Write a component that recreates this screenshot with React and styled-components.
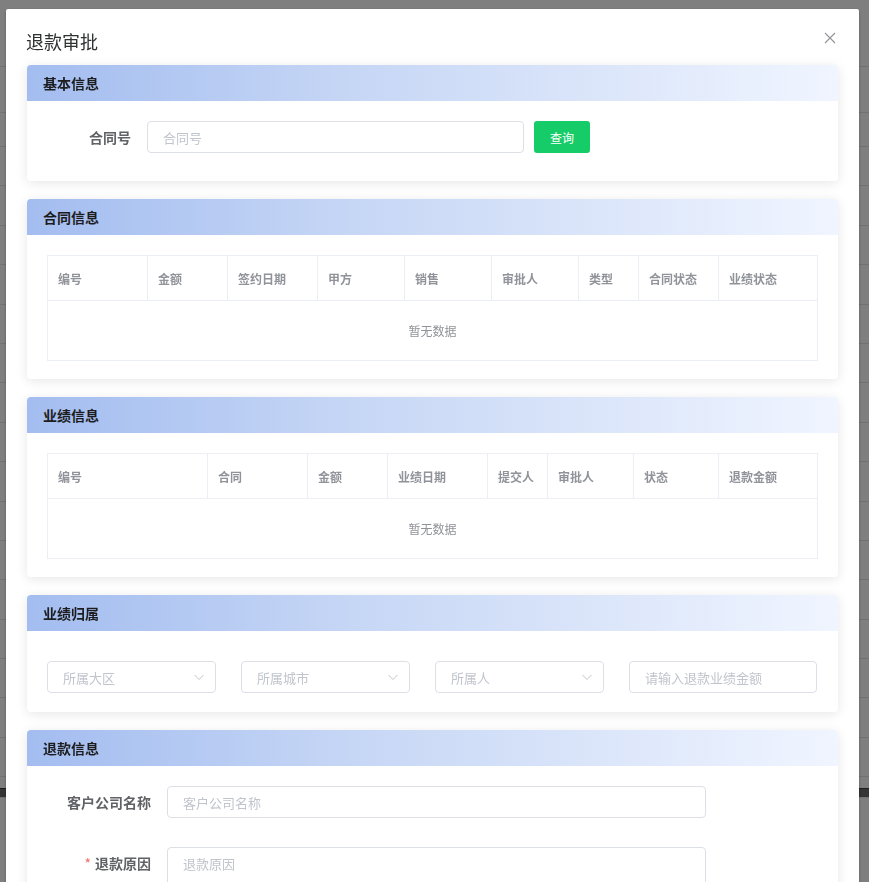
import styled, { createGlobalStyle } from "styled-components";

const GlobalStyle = createGlobalStyle`
  html, body {
    margin: 0;
    padding: 0;
    overflow: hidden;
    background: #fff;
  }
  body {
    font-family: "Noto Sans CJK SC", "Noto Sans", "Liberation Sans", sans-serif;
  }
  * { box-sizing: border-box; }
`;

// page behind the dialog mask
const Page = styled.div`
  height: 882px;
  display: flex;
  flex-direction: column;
  padding-top: 66px;
`;
const PageRow = styled.div`
  height: ${p => p.h}px;
  flex-shrink: 0;
  border-top: 1px solid ${p => (p.dark ? "#3a3a3a" : "#e4e4e4")};
  background: ${p => (p.dark ? "#6a6a6a" : "transparent")};
`;

const Mask = styled.div`
  position: fixed;
  inset: 0;
  background: rgba(0, 0, 0, 0.5);
  overflow: hidden;
`;
const Dialog = styled.div`
  width: 853px;
  margin: 9px 0 0 6px;
  background: #fff;
  border-radius: 2px;
  box-shadow: 0 1px 3px rgba(0, 0, 0, 0.3);
`;
const DialogHeader = styled.div`
  display: flex;
  align-items: center;
  justify-content: space-between;
  padding: 20px 20px 12px 20px;
  height: 56px;
`;
const DialogTitle = styled.span`
  font-size: 18px;
  line-height: 24px;
  color: #303133;
`;
const CloseBtn = styled.button`
  border: 0;
  background: none;
  padding: 0;
  width: 16px;
  height: 16px;
  display: flex;
  align-items: center;
  justify-content: center;
  margin-right: 1px;
  margin-top: -6px;
  cursor: pointer;
`;
const DialogBody = styled.div`
  padding: 0 21px 40px 21px;
  display: flex;
  flex-direction: column;
  gap: 18px;
`;

const Card = styled.section`
  background: #fff;
  border-radius: 4px;
  box-shadow: 0 2px 12px rgba(0, 0, 0, 0.1);
  overflow: hidden;
`;
const CardHeader = styled.div`
  height: 36px;
  display: flex;
  align-items: center;
  padding-left: 16px;
  background: linear-gradient(90deg, #a3bdf0 0%, #c6d6f5 40%, #f0f5ff 100%);
  font-size: 14px;
  font-weight: bold;
  color: #1d1d1f;
`;
const CardBody = styled.div`
  padding: ${p => p.pad};
`;

const FormRow = styled.div`
  display: flex;
  align-items: flex-start;
  margin-bottom: ${p => p.mb || 0}px;
`;
const Label = styled.label`
  width: ${p => p.w}px;
  flex-shrink: 0;
  height: 32px;
  line-height: 32px;
  text-align: right;
  padding-right: 16px;
  font-size: 14px;
  font-weight: bold;
  color: #606266;
`;
const Star = styled.span`
  color: #f56c6c;
  margin-right: 4px;
  font-weight: normal;
`;
const Input = styled.input`
  width: ${p => p.w}px;
  height: 32px;
  border: 1px solid #dcdfe6;
  border-radius: 4px;
  padding: 0 15px;
  font-size: 13px;
  font-family: inherit;
  color: #606266;
  outline: none;
  &::placeholder { color: #c0c4cc; }
`;
const TextArea = styled.textarea`
  width: ${p => p.w}px;
  height: 80px;
  border: 1px solid #dcdfe6;
  border-radius: 4px;
  padding: 5px 15px;
  font-size: 13px;
  line-height: 22px;
  font-family: inherit;
  resize: none;
  outline: none;
  &::placeholder { color: #c0c4cc; }
`;
const SearchButton = styled.button`
  margin-left: 10px;
  width: 56px;
  height: 32px;
  border: 0;
  border-radius: 3px;
  background: #16cc68;
  color: #fff;
  font-size: 12px;
  font-family: inherit;
`;

const Table = styled.table`
  width: 100%;
  border-collapse: collapse;
  table-layout: fixed;
  border: 1px solid #ebeef5;
`;
const Th = styled.th`
  height: 45px;
  padding: 0 10px;
  text-align: left;
  font-size: 12px;
  font-weight: bold;
  color: #909399;
  border-right: 1px solid #ebeef5;
  border-bottom: 1px solid #ebeef5;
  white-space: nowrap;
  overflow: hidden;
`;
const EmptyCell = styled.td`
  height: 60px;
  text-align: center;
  font-size: 12px;
  color: #909399;
`;

const FilterRow = styled.div`
  display: flex;
  gap: 25px;
`;
const Select = styled.div`
  width: ${p => p.w}px;
  height: 32px;
  border: 1px solid #dcdfe6;
  border-radius: 4px;
  display: flex;
  align-items: center;
  justify-content: space-between;
  padding: 0 10px 0 15px;
  font-size: 13px;
  color: #c0c4cc;
`;

const Chevron = () => (
  <svg width="12" height="12" viewBox="0 0 12 12" fill="none">
    <path d="M1.5 4l4.5 4.5L10.5 4" stroke="#c0c4cc" strokeWidth="1" />
  </svg>
);

const DataTable = ({ cols }) => (
  <Table>
    <colgroup>
      {cols.map(c => (
        <col key={c.t} style={{ width: c.w }} />
      ))}
    </colgroup>
    <thead>
      <tr>
        {cols.map(c => (
          <Th key={c.t}>{c.t}</Th>
        ))}
      </tr>
    </thead>
    <tbody>
      <tr>
        <EmptyCell colSpan={cols.length}>暂无数据</EmptyCell>
      </tr>
    </tbody>
  </Table>
);

const contractCols = [
  { t: "编号", w: 100 },
  { t: "金额", w: 80 },
  { t: "签约日期", w: 90 },
  { t: "甲方", w: 87 },
  { t: "销售", w: 87 },
  { t: "审批人", w: 87 },
  { t: "类型", w: 60 },
  { t: "合同状态", w: 80 },
  { t: "业绩状态", w: 99 },
];
const perfCols = [
  { t: "编号", w: 160 },
  { t: "合同", w: 100 },
  { t: "金额", w: 80 },
  { t: "业绩日期", w: 100 },
  { t: "提交人", w: 60 },
  { t: "审批人", w: 86 },
  { t: "状态", w: 85 },
  { t: "退款金额", w: 99 },
];

const pageRows = [46, 34, 39.4, 39.4, 39.4, 39.4, 39.4, 39.4, 39.4, 39.4, 39.4, 39.4, 39.4, 39.4, 39.4, 39.4, 39.4, 39.4, 12];

const App = () => {
  return (
    <>
      <GlobalStyle />
      <Page>
        {pageRows.map((h, i) => (
          <PageRow key={i} h={h} />
        ))}
        <PageRow h={9} dark />
        <PageRow h={40} />
      </Page>
      <Mask>
        <Dialog>
          <DialogHeader>
            <DialogTitle>退款审批</DialogTitle>
            <CloseBtn aria-label="close">
              <svg width="12" height="12" viewBox="0 0 12 12">
                <path d="M1 1l10 10M11 1L1 11" stroke="#909399" strokeWidth="1.1" />
              </svg>
            </CloseBtn>
          </DialogHeader>
          <DialogBody>
            <Card>
              <CardHeader>基本信息</CardHeader>
              <CardBody pad="20px 20px 28px 20px">
                <FormRow>
                  <Label w={100}>合同号</Label>
                  <Input w={377} placeholder="合同号" />
                  <SearchButton>查询</SearchButton>
                </FormRow>
              </CardBody>
            </Card>

            <Card>
              <CardHeader>合同信息</CardHeader>
              <CardBody pad="20px 20px 18px 20px">
                <DataTable cols={contractCols} />
              </CardBody>
            </Card>

            <Card>
              <CardHeader>业绩信息</CardHeader>
              <CardBody pad="20px 20px 18px 20px">
                <DataTable cols={perfCols} />
              </CardBody>
            </Card>

            <Card>
              <CardHeader>业绩归属</CardHeader>
              <CardBody pad="30px 20px 19px 20px">
                <FilterRow>
                  <Select w={169}>所属大区<Chevron /></Select>
                  <Select w={169}>所属城市<Chevron /></Select>
                  <Select w={169}>所属人<Chevron /></Select>
                  <Input w={188} placeholder="请输入退款业绩金额" />
                </FilterRow>
              </CardBody>
            </Card>

            <Card>
              <CardHeader>退款信息</CardHeader>
              <CardBody pad="20px 20px 28px 20px">
                <FormRow mb={29}>
                  <Label w={120}>客户公司名称</Label>
                  <Input w={539} placeholder="客户公司名称" />
                </FormRow>
                <FormRow>
                  <Label w={120}><Star>*</Star>退款原因</Label>
                  <TextArea w={539} placeholder="退款原因" />
                </FormRow>
              </CardBody>
            </Card>
          </DialogBody>
        </Dialog>
      </Mask>
    </>
  );
};

export default App;
